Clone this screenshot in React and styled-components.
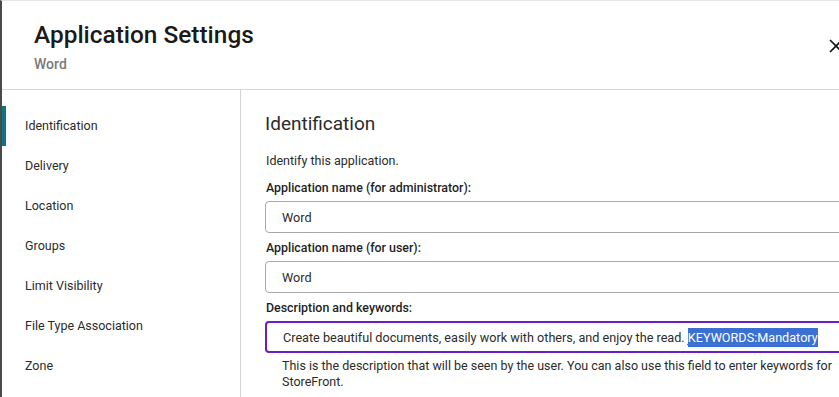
import styled, { createGlobalStyle } from "styled-components";

const GlobalStyle = createGlobalStyle`
  html, body {
    margin: 0;
    padding: 0;
    background: #ffffff;
    overflow: hidden;
  }
  body {
    font-family: Roboto, "Liberation Sans", sans-serif;
    color: #2b2b2b;
  }
`;

const navItems = [
  "Identification",
  "Delivery",
  "Location",
  "Groups",
  "Limit Visibility",
  "File Type Association",
  "Zone",
];

export default function App() {
  return (
    <>
      <GlobalStyle />
      <Dialog>
        <Header>
          <TitleBlock>
            <Title>Application Settings</Title>
            <Subtitle>Word</Subtitle>
          </TitleBlock>
          <CloseButton type="button" aria-label="Close">
            <svg width="14" height="14" viewBox="0 0 14 14">
              <path d="M1 1 L13 13 M13 1 L1 13" stroke="#111" strokeWidth="1.6" fill="none" />
            </svg>
          </CloseButton>
        </Header>
        <Body>
          <Sidebar>
            {navItems.map((item, index) => (
              <NavItem key={item} $active={index === 0}>
                {item}
              </NavItem>
            ))}
          </Sidebar>
          <Content>
            <Heading>Identification</Heading>
            <Intro>Identify this application.</Intro>
            <Label>Application name (for administrator):</Label>
            <Field>Word</Field>
            <Label>Application name (for user):</Label>
            <Field>Word</Field>
            <Label>Description and keywords:</Label>
            <Field $focused>
              Create beautiful documents, easily work with others, and enjoy the read.{" "}
              <Selected>KEYWORDS:Mandatory</Selected>
            </Field>
            <Help>
              This is the description that will be seen by the user. You can also use this field to enter keywords for
              <br />
              StoreFront.
            </Help>
          </Content>
        </Body>
      </Dialog>
    </>
  );
}

const Dialog = styled.div`
  width: 900px;
  height: 397px;
  box-sizing: border-box;
  border-left: 2px solid #4a4a4a;
  border-top: 1px solid #e4e4e4;
  display: flex;
  flex-direction: column;
`;

const Header = styled.div`
  height: 88px;
  border-bottom: 1px solid #d4d4d4;
  display: flex;
  align-items: center;
  justify-content: space-between;
  padding: 0 57px 0 32px;
  flex-shrink: 0;
`;

const TitleBlock = styled.div`
  display: flex;
  flex-direction: column;
  margin-top: 3px;
`;

const Title = styled.h1`
  margin: 0;
  font-size: 24.4px;
  line-height: 30px;
  font-weight: 500;
  color: #1a1a1a;
`;

const Subtitle = styled.div`
  font-size: 14px;
  line-height: 18px;
  margin-top: 5px;
  color: #7a7a7a;
  font-weight: 500;
`;

const CloseButton = styled.button`
  border: none;
  background: none;
  padding: 0;
  width: 14px;
  height: 14px;
  margin-top: 2px;
  display: flex;
  cursor: pointer;
`;

const Body = styled.div`
  flex: 1;
  display: flex;
  min-height: 0;
`;

const Sidebar = styled.nav`
  width: 239px;
  flex-shrink: 0;
  border-right: 1px solid #d4d4d4;
  padding-top: 16px;
  box-sizing: border-box;
`;

const NavItem = styled.div`
  height: 40px;
  display: flex;
  align-items: center;
  padding: 0 0 1px 19px;
  font-size: 12.5px;
  color: #2b2b2b;
  box-sizing: border-box;
  border-left: 4px solid ${(p) => (p.$active ? "#0e7680" : "transparent")};
`;

const Content = styled.main`
  flex: 1;
  padding: 22px 0 0 24px;
  display: flex;
  flex-direction: column;
  align-items: flex-start;
`;

const Heading = styled.h2`
  margin: 0;
  font-size: 19px;
  line-height: 24px;
  font-weight: 400;
  color: #2b2b2b;
`;

const Intro = styled.p`
  margin: 17px 0 4px 1px;
  font-size: 12.5px;
  line-height: 16px;
  color: #2b2b2b;
`;

const Label = styled.div`
  margin: 7px 0 5px 1px;
  font-size: 12.4px;
  line-height: 16px;
  font-weight: 500;
  color: #1f1f1f;
`;

const Field = styled.div`
  width: 620px;
  height: 32px;
  flex-shrink: 0;
  box-sizing: border-box;
  border: ${(p) => (p.$focused ? "2px solid #6a1fc4" : "1px solid #a8a8a8")};
  border-radius: 4px;
  display: flex;
  align-items: center;
  padding-left: 16px;
  font-size: 12.65px;
  color: #2b2b2b;
  white-space: pre;
`;

const Selected = styled.span`
  background: #3a6fd3;
  color: #ffffff;
  line-height: 17px;
  padding: 1px 0;
  text-decoration: underline dotted #e0405a;
  text-underline-offset: 2px;
`;

const Help = styled.p`
  margin: 5px 0 0 17px;
  font-size: 12.5px;
  line-height: 16px;
  color: #2b2b2b;
  white-space: nowrap;
`;
